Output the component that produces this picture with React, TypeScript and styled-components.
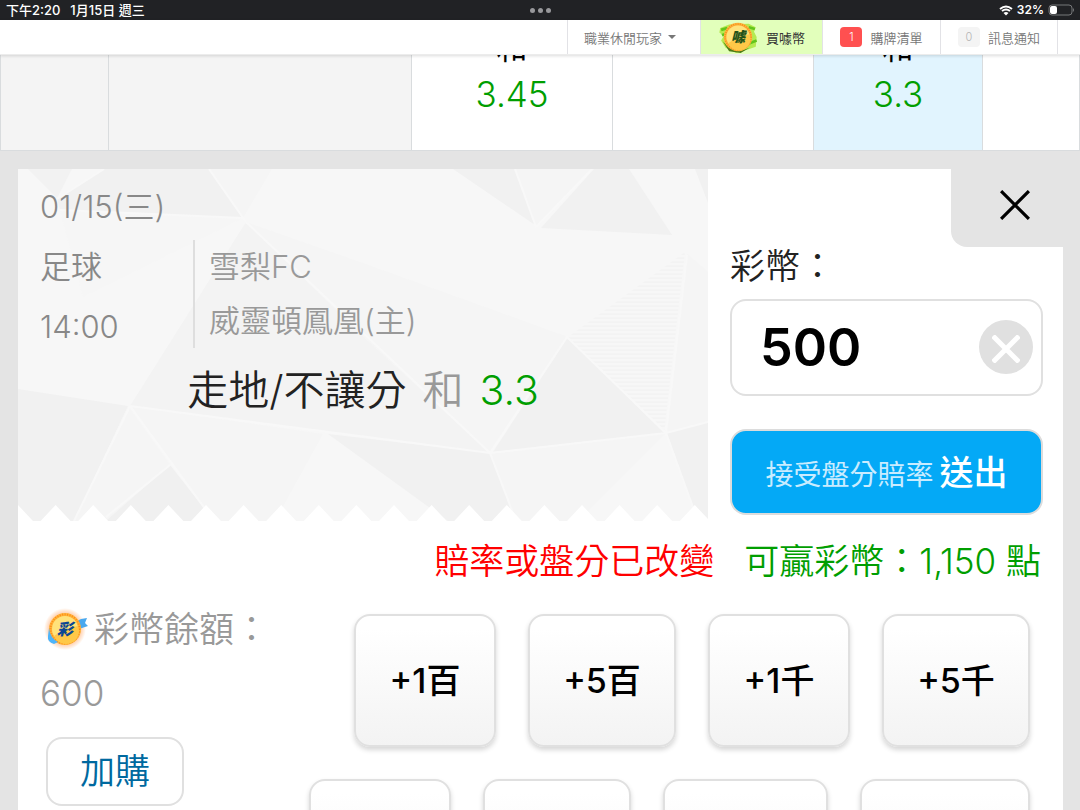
import React, { useState } from "react";
import styled, { createGlobalStyle, css } from "styled-components";

const GlobalStyle = createGlobalStyle`
  *, *::before, *::after { box-sizing: border-box; }
  body {
    margin: 0;
    background: #e4e4e4;
    font-family: Inter, "Noto Sans CJK TC", sans-serif;
    font-weight: 350;
    color: #222;
  }
  button, input { font: inherit; color: inherit; }
  button { cursor: pointer; }
`;

const Screen = styled.div`
  display: flex;
  flex-direction: column;
  height: 100vh;
  overflow: hidden;
`;

/* Device status bar */
const StatusBar = styled.header`
  display: grid;
  grid-template-columns: 1fr auto 1fr;
  align-items: center;
  flex: none;
  height: 20px;
  padding: 0 5px 0 6px;
  background: #212225;
  color: #fff;
  font-size: 12px;
  line-height: 20px;
  font-weight: 600;
`;

const StatusLeft = styled.div`
  display: flex;
  gap: 10px;
  font-size: 13px;
  font-weight: 500;
`;

const StatusRight = styled.div`
  display: flex;
  align-items: center;
  justify-content: flex-end;
  gap: 4px;
`;

const Dots = styled.div`
  display: flex;
  gap: 3px;
`;

const Dot = styled.i`
  width: 5px;
  height: 5px;
  border-radius: 50%;
  background: #98989b;
`;

/* Site navigation */
const Nav = styled.nav`
  position: relative;
  z-index: 1;
  display: flex;
  justify-content: flex-end;
  flex: none;
  height: 35px;
  padding-right: 22px;
  background: #fff;
  border-bottom: 1px solid #ececec;
  box-shadow: 0 1px 3px rgba(0, 0, 0, 0.14);
`;

const NavLink = styled.a<{ $width: number; $highlight?: boolean }>`
  display: flex;
  align-items: center;
  justify-content: center;
  gap: 8px;
  width: ${(p) => p.$width}px;
  border-left: 1px solid #e2e2e6;
  background: ${(p) => (p.$highlight ? "#e2ffbb" : "transparent")};
  color: ${(p) => (p.$highlight ? "#333" : "#777")};
  font-size: 13px;
  font-weight: ${(p) => (p.$highlight ? 400 : 350)};
  text-decoration: none;
  white-space: nowrap;

  &:last-child { border-right: 1px solid #e2e2e6; }
`;

const PlayerMenu = styled(NavLink)`
  justify-content: flex-start;
  gap: 6px;
  padding-left: 16px;
`;

const Caret = styled.i`
  border: 4px solid transparent;
  border-top-color: #777;
  border-bottom: 0;
`;

const Badge = styled.span<{ $active?: boolean }>`
  width: 22px;
  height: 20px;
  border-radius: 4px;
  background: ${(p) => (p.$active ? "#ff5050" : "#f4f4f4")};
  color: ${(p) => (p.$active ? "#fff" : "#b4b4b4")};
  font-size: 11px;
  line-height: 21px;
  text-align: center;
`;

/* Odds row */
const OddsTable = styled.table`
  flex: none;
  width: 100%;
  height: 95px;
  border-collapse: collapse;
  table-layout: fixed;
  background: #fff;
`;

const OddsCell = styled.td<{ $width?: number; $tone?: "muted" | "selected" }>`
  width: ${(p) => (p.$width ? `${p.$width}px` : "auto")};
  height: 95px;
  padding: 0;
  border: 1px solid #d9dcde;
  border-top: 0;
  background: ${(p) =>
    p.$tone === "muted" ? "#f4f4f4" : p.$tone === "selected" ? "#e1f4fe" : "#fff"};
`;

const Odds = styled.div`
  display: flex;
  flex-direction: column;
  justify-content: flex-end;
  height: 94px;
  padding-bottom: 31px;
  overflow: hidden;
  color: #000;
  font-size: 31px;
  line-height: 44px;
  font-weight: 400;
  text-align: center;
`;

const OddsValue = styled.strong`
  flex: none;
  color: #009e00;
  font-size: 35px;
  line-height: 48px;
  font-weight: 350;
`;

/* Bet slip */
const SlipArea = styled.main`
  flex: 1;
  min-height: 0;
  padding: 18px 17px 0 18px;
  background: #e4e4e4;
`;

const Slip = styled.section`
  min-height: 100%;
  background: #fff;
`;

const SlipTop = styled.div`
  display: grid;
  grid-template-columns: 1fr 355px;
`;

const Ticket = styled.div`
  position: relative;
  height: 352px;
  padding: 8px 22px;
  color: #888;
  font-size: 31px;
  line-height: 60px;
`;

const TicketArt = styled.svg`
  position: absolute;
  inset: 0;
  width: 100%;
  height: 100%;
`;

const TicketBody = styled.div`
  position: relative;
  display: grid;
  grid-template-columns: 153px 1fr;
`;

const Wide = styled.div`
  grid-column: 1 / -1;
`;

const Teams = styled.div`
  align-self: start;
  margin-top: 3px;
  padding-left: 14px;
  border-left: 2px solid #dedede;
  color: #999;
  line-height: 54px;
`;

const Pick = styled(Wide)`
  display: flex;
  justify-content: center;
  gap: 16px;
  padding-top: 3px;
  color: #222;
  font-size: 41px;
`;

const PickSide = styled.span`
  color: #999;
`;

const PickOdds = styled.span`
  color: #009e00;
`;

const Stake = styled.form`
  display: flex;
  flex-direction: column;
  padding-left: 22px;
`;

const CloseButton = styled.button`
  display: flex;
  align-items: center;
  justify-content: center;
  align-self: flex-end;
  width: 112px;
  height: 78px;
  padding: 0 0 6px 16px;
  border: 0;
  border-radius: 0 0 0 16px;
  background: #e4e4e4;
`;

const StakeLabel = styled.label`
  margin-bottom: 14px;
  font-size: 35px;
  line-height: 38px;
`;

const StakeField = styled.div`
  display: flex;
  align-items: center;
  height: 97px;
  margin-right: 20px;
  padding: 0 8px 0 28px;
  border: 2px solid #e0e0e0;
  border-radius: 16px;
`;

const StakeInput = styled.input`
  flex: 1;
  min-width: 0;
  padding: 0;
  border: 0;
  outline: 0;
  background: none;
  color: #000;
  font-size: 52px;
  font-weight: 600;
`;

const ClearButton = styled.button`
  display: flex;
  align-items: center;
  justify-content: center;
  width: 54px;
  height: 54px;
  padding: 4px 0 0;
  border: 0;
  border-radius: 50%;
  background: #e0e0e0;
`;

const SubmitButton = styled.button`
  display: flex;
  align-items: baseline;
  justify-content: center;
  gap: 6px;
  height: 86px;
  margin: 33px 20px 0 0;
  padding: 0;
  border: 2px solid #dcdcdc;
  border-radius: 16px;
  background: #04a9f6;
  color: #fff;
  font-size: 34px;
  line-height: 84px;
  font-weight: 500;
`;

const SubmitNote = styled.span`
  color: #c9ecff;
  font-size: 28px;
  font-weight: 400;
`;

const Notice = styled.p`
  display: flex;
  justify-content: flex-end;
  gap: 30px;
  margin: 0;
  padding: 4px 22px 0 0;
  color: #009e00;
  font-size: 35px;
  line-height: 72px;
`;

const Warning = styled.span`
  color: #f00;
`;

const SlipBottom = styled.div`
  display: flex;
  padding: 0 33px 0 22px;
`;

const Balance = styled.div`
  flex: none;
  width: 240px;
  color: #999;
  font-size: 35px;
  line-height: 64px;
`;

const BalanceTitle = styled.div`
  display: flex;
  align-items: center;
  gap: 4px;
  white-space: nowrap;
`;

const outlined = css`
  border: 2px solid #e0e0e0;
  border-radius: 16px;
`;

const TopUpButton = styled.button`
  ${outlined}
  display: block;
  width: 138px;
  height: 69px;
  margin: 12px 0 0 6px;
  padding: 0;
  background: #fff;
  color: #00699f;
  line-height: 60px;
`;

const QuickAmounts = styled.div`
  display: flex;
  flex: 1;
  flex-wrap: wrap;
  justify-content: flex-end;
  gap: 32px;
  padding-top: 17px;
`;

const AmountButton = styled.button<{ $width: number }>`
  ${outlined}
  width: ${(p) => p.$width}px;
  height: 133px;
  padding: 0 0 3px;
  background: linear-gradient(#fff 10%, #f3f3f3);
  box-shadow: 0 3px 5px rgba(0, 0, 0, 0.16);
  color: #000;
  font-size: 34px;
  font-weight: 500;
`;

const amounts = [
  { label: "+1百", width: 142 },
  { label: "+5百", width: 148 },
  { label: "+1千", width: 142 },
  { label: "+5千", width: 148 },
  { label: "", width: 142 },
  { label: "", width: 148 },
  { label: "", width: 165 },
  { label: "", width: 170 },
];

const facets: [string, string][] = [
  ["10,0 54,0 39,29", "#f2f2f2"],
  ["86,0 191,0 225,49 42,41 39,30", "#f1f1f1"],
  ["191,0 254,0 225,49", "#f5f5f5"],
  ["42,41 225,49 65,128", "#f6f6f6"],
  ["228,53 342,93 550,168 472,284 350,172", "#f5f5f5"],
  ["228,53 112,237 472,284 350,172", "#f3f3f3"],
  ["435,0 497,0 517,56", "#f1f1f1"],
  ["497,0 574,0 519,58", "#f5f5f5"],
  ["594,0 611,0 654,66 523,59 576,0", "#f1f1f1"],
  ["677,0 690,0 690,34", "#f1f1f1"],
  ["669,85 690,103 690,252 648,264", "#f5f5f5"],
  ["550,168 646,264 475,283", "#f1f1f1"],
  ["0,220 110,237 56,352 0,352", "#f1f1f1"],
  ["110,237 152,296 89,352 56,352", "#f5f5f5"],
  ["152,296 196,352 88,352", "#f0f0f0"],
  ["112,237 305,265 257,352 196,352", "#f5f5f5"],
  ["310,265 472,284 498,352 430,352", "#f1f1f1"],
  ["472,284 648,264 560,352 498,352", "#f5f5f5"],
  ["649,264 690,253 690,352 680,352", "#f1f1f1"],
];

const creases =
  "M39 30L86 0M42 41L225 49M191 0L228 53L472 284M112 237L472 284L648 264L690 253M112 237L56 352M112 237L196 352M152 296L88 348M497 0L518 58L574 0M472 284L549 168L648 264L669 86M472 284L498 352M648 264L680 352";

const teeth = Array.from({ length: 19 }, (_, i) => {
  const x = i * 37.6;
  return `M${x - 15} 352L${x} 336L${x + 15} 352Z`;
}).join("");

function TicketBackground() {
  return (
    <TicketArt viewBox="0 0 690 352" preserveAspectRatio="none" aria-hidden="true">
      <defs>
        <pattern id="stripes" width="4" height="4" patternUnits="userSpaceOnUse">
          <path d="M0 1H4" stroke="#f0f0f0" />
        </pattern>
      </defs>
      <path d="M0 0H690V352H0Z" fill="#f7f7f7" />
      {facets.map(([points, fill]) => (
        <polygon key={points} points={points} fill={fill} />
      ))}
      <path d="M667 83L550 168L646 264Z" fill="url(#stripes)" />
      <path d={creases} fill="none" stroke="#f8f8f8" strokeWidth="2" />
      <path d={teeth} fill="#fff" />
    </TicketArt>
  );
}

function RimmedCoin({ ticks }: { ticks: string }) {
  return (
    <>
      <circle cx="22" cy="18" r="16" fill="#ffb43a" />
      <circle cx="22" cy="18" r="14.500" fill="none" stroke={ticks} strokeWidth="2" strokeDasharray="1 1.500" />
      <circle cx="22" cy="18" r="13" fill="#ffe27b" />
      <path d="M11 25Q22 17 35 15A13 13 0 0 1 11 25Z" fill="#ffc848" />
    </>
  );
}

function GreenCoin() {
  return (
    <svg width="40" height="32" viewBox="0 0 44 36" aria-hidden="true">
      <path d="M2 8L12 4L34 3L42 7L40 12L43 18L42 29L33 32L20 36L8 30L3 22L6 17L1 13Z" fill="#b4ea50" />
      <path d="M5 23L12 30L24 34L35 30L25 36L12 34Z" fill="#4e7a16" />
      <path d="M3 10L10 8M4 16L9 14M34 7L41 9M35 25L43 22" stroke="#62c51c" strokeWidth="3" />
      <RimmedCoin ticks="#f08c1e" />
      <text x="22" y="24" textAnchor="middle" fontSize="16" fontWeight="900" fontStyle="italic" fill="#24521a">噱</text>
    </svg>
  );
}

function BlueCoin() {
  return (
    <svg width="50" height="44" viewBox="-3 -4 50 44" aria-hidden="true">
      <defs>
        <radialGradient id="glow">
          <stop offset="70%" stopColor="#ffb27a" stopOpacity="0.7" />
          <stop offset="100%" stopColor="#ffb27a" stopOpacity="0" />
        </radialGradient>
      </defs>
      <circle cx="22" cy="18" r="21" fill="url(#glow)" />
      <path d="M34 10L38 8L44 7L42 12L45 15L36 18Z" fill="#4aa8ee" />
      <RimmedCoin ticks="#ff8a16" />
      <path d="M6 17Q7 27 15 31L11 33Q4 31 5 25Z" fill="#4db4fa" />
      <text x="22" y="24" textAnchor="middle" fontSize="16" fontWeight="900" fontStyle="italic" fill="#0b4694">彩</text>
    </svg>
  );
}

function WifiIcon() {
  return (
    <svg width="14" height="11" viewBox="0 0 14 11" fill="none" stroke="#fff" strokeWidth="2" aria-hidden="true">
      <path d="M1 4Q7 -1 13 4M3 6Q7 3 11 6" />
      <path d="M4.500 8Q7 6 9.500 8L7 10.500Z" fill="#fff" stroke="none" />
    </svg>
  );
}

function BatteryIcon() {
  return (
    <svg width="27" height="12" viewBox="0 0 27 12" aria-hidden="true">
      <rect x="1" y="1" width="23" height="10" rx="3" fill="none" stroke="#77787a" />
      <rect x="2" y="2" width="7" height="8" rx="2" fill="#fff" />
      <path d="M25 4Q27 6 25 8Z" fill="#77787a" />
    </svg>
  );
}

function Cross({ size, color, weight }: { size: number; color: string; weight: number }) {
  return (
    <svg width={size} height={size} viewBox="0 0 28 28" aria-hidden="true">
      <path d="M1 1L27 27M27 1L1 27" stroke={color} strokeWidth={weight} />
    </svg>
  );
}

export default function App() {
  const [stake, setStake] = useState("500");

  return (
    <>
      <GlobalStyle />
      <Screen>
        <StatusBar>
          <StatusLeft>
            <span>下午2:20</span>
            <span>1月15日 週三</span>
          </StatusLeft>
          <Dots>
            <Dot />
            <Dot />
            <Dot />
          </Dots>
          <StatusRight>
            <WifiIcon />
            <span>32%</span>
            <BatteryIcon />
          </StatusRight>
        </StatusBar>

        <Nav>
          <PlayerMenu href="#" $width={133}>
            職業休閒玩家 <Caret />
          </PlayerMenu>
          <NavLink href="#" $width={122} $highlight>
            <GreenCoin /> 買噱幣
          </NavLink>
          <NavLink href="#" $width={118}>
            <Badge $active>1</Badge> 購牌清單
          </NavLink>
          <NavLink href="#" $width={118}>
            <Badge>0</Badge> 訊息通知
          </NavLink>
        </Nav>

        <OddsTable>
          <tbody>
            <tr>
              <OddsCell $width={108} $tone="muted" />
              <OddsCell $tone="muted" />
              <OddsCell $width={201}>
                <Odds>
                  和<OddsValue>3.45</OddsValue>
                </Odds>
              </OddsCell>
              <OddsCell $width={201} />
              <OddsCell $width={169} $tone="selected">
                <Odds>
                  和<OddsValue>3.3</OddsValue>
                </Odds>
              </OddsCell>
              <OddsCell $width={97} />
            </tr>
          </tbody>
        </OddsTable>

        <SlipArea>
          <Slip>
            <SlipTop>
              <Ticket>
                <TicketBackground />
                <TicketBody>
                  <Wide>01/15(三)</Wide>
                  <div>
                    <div>足球</div>
                    <div>14:00</div>
                  </div>
                  <Teams>
                    <div>雪梨FC</div>
                    <div>威靈頓鳳凰(主)</div>
                  </Teams>
                  <Pick>
                    <span>走地/不讓分</span>
                    <PickSide>和</PickSide>
                    <PickOdds>3.3</PickOdds>
                  </Pick>
                </TicketBody>
              </Ticket>

              <Stake onSubmit={(e) => e.preventDefault()}>
                <CloseButton type="button">
                  <Cross size={30} color="#000" weight={3} />
                </CloseButton>
                <StakeLabel htmlFor="stake">彩幣：</StakeLabel>
                <StakeField>
                  <StakeInput
                    id="stake"
                    inputMode="numeric"
                    value={stake}
                    onChange={(e) => setStake(e.target.value)}
                  />
                  <ClearButton type="button" onClick={() => setStake("")}>
                    <Cross size={28} color="#fff" weight={5} />
                  </ClearButton>
                </StakeField>
                <SubmitButton type="submit">
                  <SubmitNote>接受盤分賠率</SubmitNote>
                  送出
                </SubmitButton>
              </Stake>
            </SlipTop>

            <Notice>
              <Warning>賠率或盤分已改變</Warning>
              <span>可贏彩幣：1,150 點</span>
            </Notice>

            <SlipBottom>
              <Balance>
                <BalanceTitle>
                  <BlueCoin />
                  彩幣餘額：
                </BalanceTitle>
                <div>600</div>
                <TopUpButton type="button">加購</TopUpButton>
              </Balance>
              <QuickAmounts>
                {amounts.map(({ label, width }, i) => (
                  <AmountButton key={i} type="button" $width={width}>
                    {label}
                  </AmountButton>
                ))}
              </QuickAmounts>
            </SlipBottom>
          </Slip>
        </SlipArea>
      </Screen>
    </>
  );
}
